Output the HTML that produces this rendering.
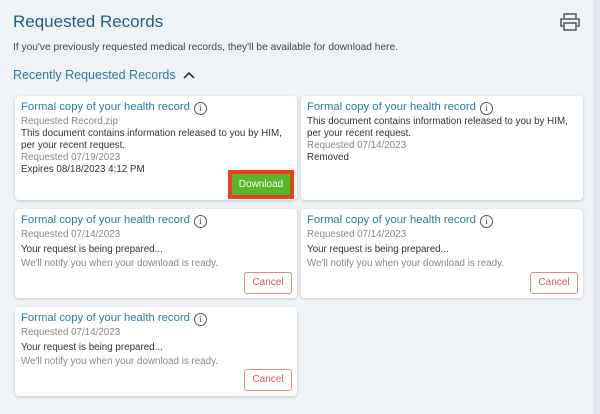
<!DOCTYPE html>
<html><head><style>
body{margin:0;width:600px;height:414px;background:#eef3f7;font-family:"Liberation Sans",sans-serif;position:relative;overflow:hidden;color:#333}
.a{position:absolute}
.edge{position:absolute;right:0;top:0;width:5px;height:414px;background:#e2e8ee;border-left:1px solid #d5dde4}
.card{position:absolute;background:#fff;border-radius:4px;box-shadow:0 1px 3px rgba(0,0,0,.18)}
.t{position:absolute;left:6px;top:5px;font-size:11.3px;color:#2c7aa3;white-space:nowrap}
.i{display:inline-block;width:11px;height:11px;border:1px solid #555;border-radius:50%;font-size:9px;line-height:11px;text-align:center;color:#444;vertical-align:-1px;margin-left:4px;font-family:"Liberation Serif",serif}
.l{position:absolute;left:6px;font-size:9.8px;white-space:nowrap;line-height:12px}
.g{color:#888}
.btn{position:absolute;border:1px solid #e08a8a;border-radius:3px;color:#d35a5a;font-size:10px;text-align:center;width:46px;height:20px;line-height:20px;background:#fff}
</style></head><body>
<div class="edge"></div>
<div class="a" style="left:13px;top:12px;font-size:17px;color:#1f5f86">Requested Records</div>
<svg class="a" style="left:559px;top:12px" width="22" height="20" viewBox="0 0 22 20"><path d="M5 6V2h12v4M4 14H2V7h18v7h-2M5 11h12v7H5z" fill="none" stroke="#555" stroke-width="1.5"/></svg>
<div class="a" style="left:13px;top:42px;font-size:10.2px;color:#444">If you've previously requested medical records, they'll be available for download here.</div>
<div class="a" style="left:13px;top:68px;font-size:12.5px;color:#2c7aa3">Recently Requested Records <svg width="12" height="8" viewBox="0 0 12 8" style="margin-left:4px"><path d="M1 7l5-5 5 5" fill="none" stroke="#333" stroke-width="1.6"/></svg></div>

<div class="card" style="left:15px;top:96px;width:282px;height:104px">
<div class="t">Formal copy of your health record<span class="i">i</span></div>
<div class="l g" style="top:20px">Requested Record.zip</div>
<div class="l" style="top:32px">This document contains information released to you by HIM,<br>per your recent request.</div>
<div class="l g" style="top:56px">Requested 07/19/2023</div>
<div class="l" style="top:68px">Expires 08/18/2023 4:12 PM</div>
<div class="a" style="left:213px;top:74px;width:66px;height:29px;background:#e8401c"></div>
<div class="a" style="left:217px;top:78px;width:58px;height:21px;background:#5ab52a;color:#fff;font-size:10px;text-align:center;line-height:21px">Download</div>
</div>
<div class="card" style="left:301px;top:96px;width:282px;height:104px">
<div class="t">Formal copy of your health record<span class="i">i</span></div>
<div class="l" style="top:20px">This document contains information released to you by HIM,<br>per your recent request.</div>
<div class="l g" style="top:44px">Requested 07/14/2023</div>
<div class="l" style="top:56px">Removed</div>
</div>

<div class="card" style="left:15px;top:209px;width:282px;height:89px">
<div class="t">Formal copy of your health record<span class="i">i</span></div>
<div class="l g" style="top:20px">Requested 07/14/2023</div>
<div class="l" style="top:35px">Your request is being prepared...</div>
<div class="l g" style="top:49px">We'll notify you when your download is ready.</div>
<div class="btn" style="left:229px;top:63px">Cancel</div>
</div>
<div class="card" style="left:301px;top:209px;width:282px;height:89px">
<div class="t">Formal copy of your health record<span class="i">i</span></div>
<div class="l g" style="top:20px">Requested 07/14/2023</div>
<div class="l" style="top:35px">Your request is being prepared...</div>
<div class="l g" style="top:49px">We'll notify you when your download is ready.</div>
<div class="btn" style="left:229px;top:63px">Cancel</div>
</div>
<div class="card" style="left:15px;top:307px;width:282px;height:89px">
<div class="t">Formal copy of your health record<span class="i">i</span></div>
<div class="l g" style="top:20px">Requested 07/14/2023</div>
<div class="l" style="top:35px">Your request is being prepared...</div>
<div class="l g" style="top:49px">We'll notify you when your download is ready.</div>
<div class="btn" style="left:229px;top:62px">Cancel</div>
</div>
</body></html>
